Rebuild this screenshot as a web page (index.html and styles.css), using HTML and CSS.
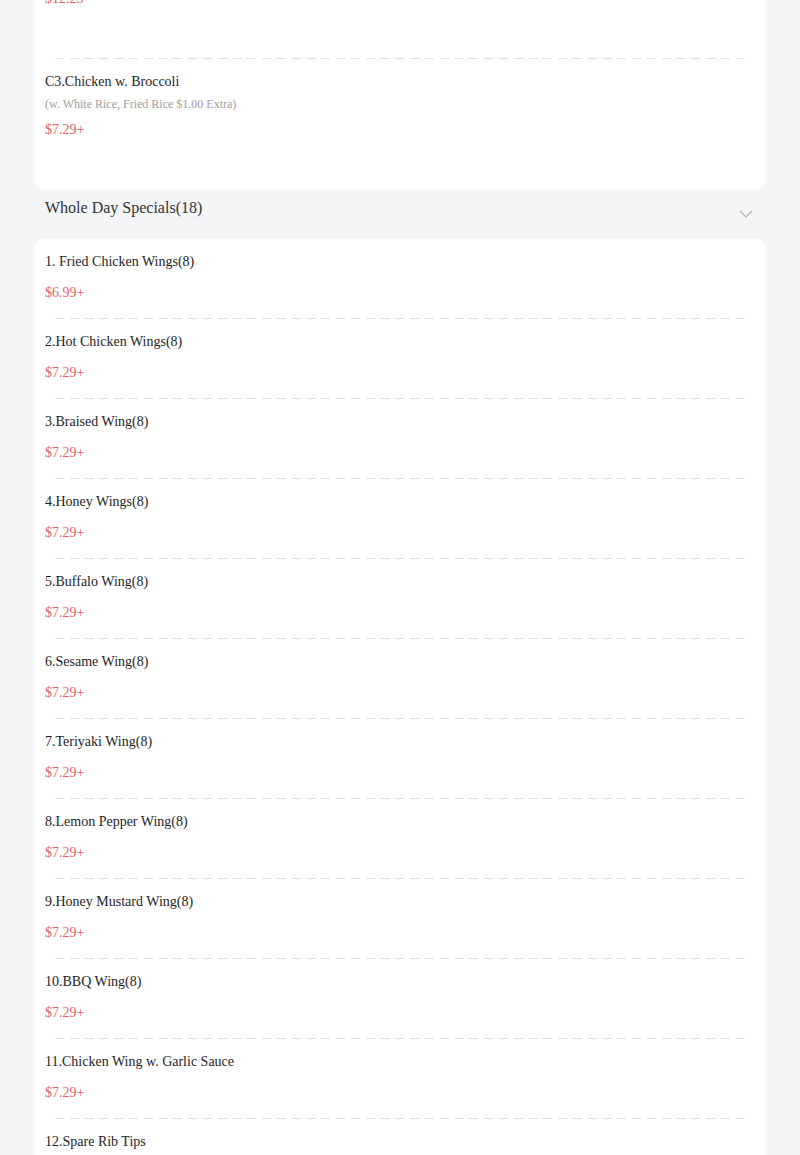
FILE: index.html
```html
<!DOCTYPE html>
<html lang="en">
<head>
<meta charset="utf-8">
<title>Menu</title>
<link rel="stylesheet" href="styles.css">
</head>
<body>
<div class="page">
  <div class="card card-first">
    <div class="item item-rich">
      <div class="title">C2.Shrimp w. Broccoli</div>
      <div class="sub">(w. White Rice, Fried Rice $1.00 Extra)</div>
      <div class="price">$12.25</div>
    </div>
    <div class="divider"></div>
    <div class="item item-rich item-rich-last">
      <div class="title">C3.Chicken w. Broccoli</div>
      <div class="sub">(w. White Rice, Fried Rice $1.00 Extra)</div>
      <div class="price">$7.29+</div>
    </div>
  </div>

  <div class="section-head">
    <span class="section-title">Whole Day Specials(18)</span>
    <svg class="chev" width="14" height="8" viewBox="0 0 14 8"><path d="M1 1l6 6 6-6" fill="none" stroke="#b3b3b3" stroke-width="1.2"/></svg>
  </div>

  <div class="card">
    <div class="item"><div class="title">1. Fried Chicken Wings(8)</div><div class="price gap">$6.99+</div></div>
    <div class="divider"></div>
    <div class="item"><div class="title">2.Hot Chicken Wings(8)</div><div class="price gap">$7.29+</div></div>
    <div class="divider"></div>
    <div class="item"><div class="title">3.Braised Wing(8)</div><div class="price gap">$7.29+</div></div>
    <div class="divider"></div>
    <div class="item"><div class="title">4.Honey Wings(8)</div><div class="price gap">$7.29+</div></div>
    <div class="divider"></div>
    <div class="item"><div class="title">5.Buffalo Wing(8)</div><div class="price gap">$7.29+</div></div>
    <div class="divider"></div>
    <div class="item"><div class="title">6.Sesame Wing(8)</div><div class="price gap">$7.29+</div></div>
    <div class="divider"></div>
    <div class="item"><div class="title">7.Teriyaki Wing(8)</div><div class="price gap">$7.29+</div></div>
    <div class="divider"></div>
    <div class="item"><div class="title">8.Lemon Pepper Wing(8)</div><div class="price gap">$7.29+</div></div>
    <div class="divider"></div>
    <div class="item"><div class="title">9.Honey Mustard Wing(8)</div><div class="price gap">$7.29+</div></div>
    <div class="divider"></div>
    <div class="item"><div class="title">10.BBQ Wing(8)</div><div class="price gap">$7.29+</div></div>
    <div class="divider"></div>
    <div class="item"><div class="title">11.Chicken Wing w. Garlic Sauce</div><div class="price gap">$7.29+</div></div>
    <div class="divider"></div>
    <div class="item"><div class="title">12.Spare Rib Tips</div><div class="price gap">$7.29+</div></div>
  </div>
</div>
</body>
</html>
```
FILE: styles.css
```css
html, body {
  margin: 0;
  padding: 0;
  background: #f4f5f7;
  font-family: "Liberation Serif", "Times New Roman", serif;
}
.page {
  padding: 0 35px;
}
.card {
  background: #ffffff;
  border-radius: 8px;
}
.card-first {
  margin-top: -71px;
  border-top-left-radius: 0;
  border-top-right-radius: 0;
}
.item {
  padding: 13px 10px 15px;
}
.item-rich {
  box-sizing: border-box;
  height: 129px;
  padding-top: 12px;
  padding-bottom: 0;
}
.item-rich-last {
  height: 130px;
  padding-top: 13px;
}
.title {
  font-size: 14px;
  line-height: 20px;
  color: #1e1e1e;
}
.sub {
  margin-top: 4px;
  font-size: 12px;
  line-height: 16px;
  color: #a0a0a0;
}
.price {
  margin-top: 8px;
  font-size: 14px;
  line-height: 20px;
  color: #dd6461;
}
.price.gap {
  margin-top: 11px;
}
.divider {
  height: 1px;
  margin: 0 20px;
  background-image: repeating-linear-gradient(to right, #dedede 0, #dedede 9px, transparent 9px, transparent 14.8px);
}
.section-head {
  height: 50px;
  box-sizing: border-box;
  padding: 9px 12px 0 10px;
  display: flex;
  justify-content: space-between;
  align-items: flex-start;
}
.section-title {
  font-size: 16px;
  line-height: 20px;
  color: #333333;
}
.chev {
  margin-top: 12px;
}
```
